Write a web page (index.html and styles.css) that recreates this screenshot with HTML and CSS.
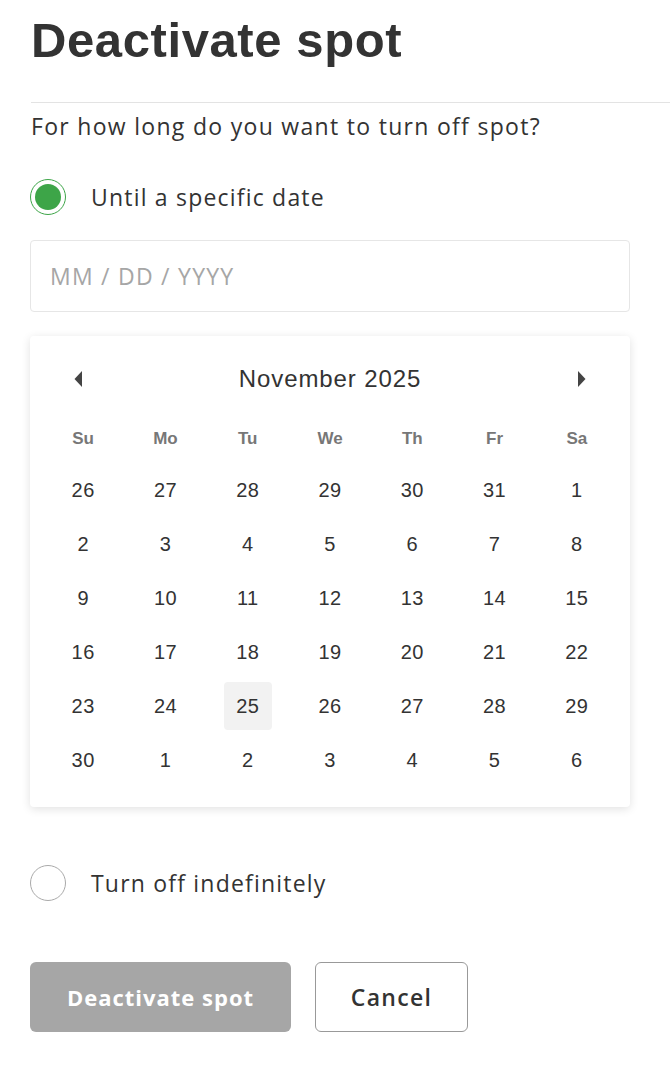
FILE: index.html
```html
<!DOCTYPE html>
<html lang="en">
<head>
<meta charset="utf-8">
<title>Deactivate spot</title>
<link rel="stylesheet" href="styles.css">
</head>
<body>
<main class="page">
  <h1 class="title">Deactivate spot</h1>
  <hr class="rule">
  <p class="question">For how long do you want to turn off spot?</p>

  <label class="option">
    <span class="radio radio-on"><span class="dot"></span></span>
    <span class="option-label">Until a specific date</span>
  </label>

  <div class="date-input">MM / DD / YYYY</div>

  <section class="calendar">
    <div class="cal-head">
      <button class="nav" aria-label="Previous month">
        <svg width="10" height="18" viewBox="0 0 10 18"><path d="M9 1 L1.5 9 L9 17 Z" fill="#444"/></svg>
      </button>
      <div class="month">November 2025</div>
      <button class="nav" aria-label="Next month">
        <svg width="10" height="18" viewBox="0 0 10 18"><path d="M1 1 L8.5 9 L1 17 Z" fill="#444"/></svg>
      </button>
    </div>
    <div class="grid weekdays">
      <span>Su</span><span>Mo</span><span>Tu</span><span>We</span><span>Th</span><span>Fr</span><span>Sa</span>
    </div>
    <div class="grid days">
      <span>26</span><span>27</span><span>28</span><span>29</span><span>30</span><span>31</span><span>1</span>
      <span>2</span><span>3</span><span>4</span><span>5</span><span>6</span><span>7</span><span>8</span>
      <span>9</span><span>10</span><span>11</span><span>12</span><span>13</span><span>14</span><span>15</span>
      <span>16</span><span>17</span><span>18</span><span>19</span><span>20</span><span>21</span><span>22</span>
      <span>23</span><span>24</span><span class="today">25</span><span>26</span><span>27</span><span>28</span><span>29</span>
      <span>30</span><span>1</span><span>2</span><span>3</span><span>4</span><span>5</span><span>6</span>
    </div>
  </section>

  <label class="option option-second">
    <span class="radio"></span>
    <span class="option-label">Turn off indefinitely</span>
  </label>

  <div class="actions">
    <button class="btn btn-primary">Deactivate spot</button>
    <button class="btn btn-secondary">Cancel</button>
  </div>
</main>
</body>
</html>
```

FILE: styles.css
```css
html, body {
  margin: 0;
  padding: 0;
  background: #fff;
}

body {
  font-family: "Open Sans", "Liberation Sans", sans-serif;
  color: #333;
  overflow: hidden;
}

.page {
  padding: 12px 0 0 30px;
  display: flex;
  flex-direction: column;
}

.title {
  margin: 0 0 0 1px;
  font-family: "Liberation Sans", Arial, sans-serif;
  font-weight: 700;
  font-size: 49px;
  line-height: 56px;
  letter-spacing: 0.6px;
  color: #333;
}

.rule {
  margin: 34px 0 0 1px;
  border: 0;
  border-top: 1px solid #e3e3e3;
  height: 0;
}

.question {
  margin: 8px 0 0 1px;
  font-size: 23px;
  line-height: 30px;
  letter-spacing: 1.3px;
  color: #333;
}

.option {
  display: flex;
  align-items: center;
  gap: 25px;
  margin-top: 38px;
  height: 36px;
}

.radio {
  width: 34px;
  height: 34px;
  border-radius: 50%;
  border: 1px solid #aaa;
  display: flex;
  align-items: center;
  justify-content: center;
  flex: none;
  box-sizing: content-box;
}

.radio-on {
  border-color: #3da548;
}

.dot {
  width: 26px;
  height: 26px;
  border-radius: 50%;
  background: #3da548;
}

.option-label {
  font-size: 23px;
  letter-spacing: 1.2px;
  color: #333;
}

.date-input {
  margin-top: 25px;
  width: 600px;
  height: 72px;
  box-sizing: border-box;
  border: 1px solid #e6e6e6;
  border-radius: 4px;
  padding: 0 19px;
  display: flex;
  align-items: center;
  font-size: 23px;
  letter-spacing: 1.25px;
  color: #a6a6a6;
}

.calendar {
  margin-top: 24px;
  width: 600px;
  box-sizing: border-box;
  padding: 20px 12px 20px;
  background: #fff;
  border-radius: 4px;
  box-shadow: 0 2px 10px rgba(0, 0, 0, 0.12);
}

.cal-head {
  display: flex;
  align-items: center;
  justify-content: space-between;
  height: 46px;
  padding: 0 31px;
}

.nav {
  border: 0;
  background: none;
  padding: 0;
  width: 10px;
  height: 18px;
  display: flex;
}

.month {
  font-family: "Liberation Sans", Arial, sans-serif;
  font-size: 24px;
  letter-spacing: 0.9px;
  color: #333;
}

.grid {
  display: grid;
  grid-template-columns: repeat(7, 1fr);
  justify-items: center;
  align-items: center;
}

.weekdays {
  margin-top: 19px;
  height: 36px;
  font-family: "Liberation Sans", Arial, sans-serif;
  font-weight: 700;
  font-size: 17px;
  color: #777;
}

.days {
  margin-top: 6px;
  grid-auto-rows: 54px;
  font-family: "Liberation Sans", Arial, sans-serif;
  font-size: 20px;
  letter-spacing: 0.4px;
  color: #333;
}

.days span {
  width: 48px;
  height: 48px;
  display: flex;
  align-items: center;
  justify-content: center;
  border-radius: 4px;
}

.days .today {
  background: #f2f2f2;
}

.option-second {
  margin-top: 58px;
}

.actions {
  display: flex;
  gap: 24px;
  margin-top: 61px;
}

.btn {
  height: 70px;
  border-radius: 6px;
  font-family: "Open Sans", "Liberation Sans", sans-serif;
  font-size: 22px;
  letter-spacing: 1px;
  padding: 0;
}

.btn-primary {
  width: 261px;
  background: #a6a6a6;
  border: 0;
  color: #fff;
  font-weight: 700;
}

.btn-secondary {
  width: 153px;
  background: #fff;
  border: 1px solid #999;
  color: #333;
  font-weight: 600;
  font-size: 23px;
  letter-spacing: 1.3px;
}
```
